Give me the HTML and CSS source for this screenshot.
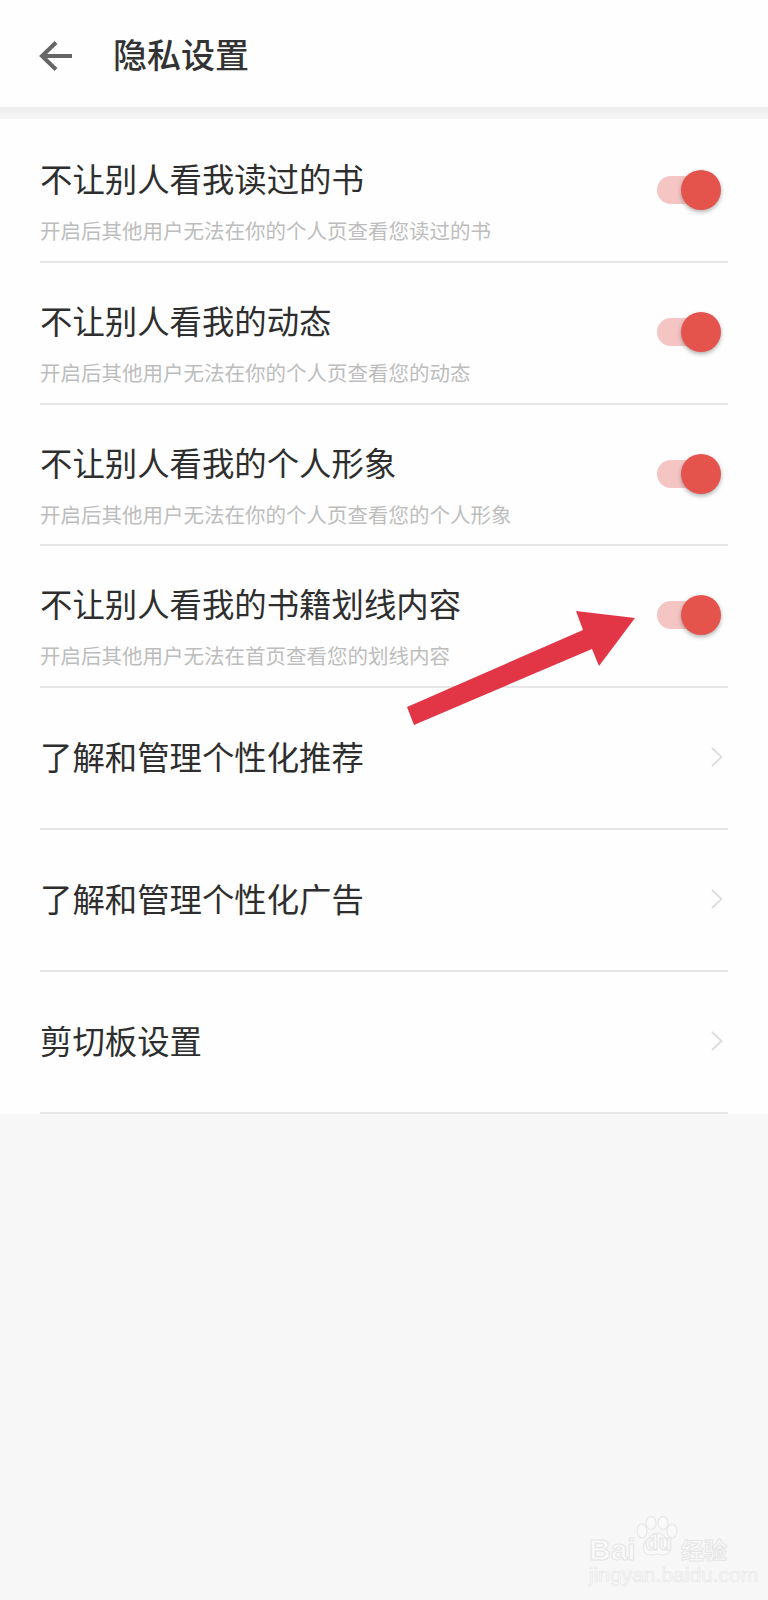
FILE: index.html
```html
<!DOCTYPE html>
<html lang="zh-CN">
<head>
<meta charset="utf-8">
<title>隐私设置</title>
<link rel="stylesheet" href="styles.css">
</head>
<body>
<div class="page">
  <header class="header">
    <svg class="back" viewBox="0 0 34 32" width="34" height="32"><path d="M33 16H4M17 2.500L3 16l14 13.500" fill="none" stroke="#666" stroke-width="4"/></svg>
    <h1 class="page-title">隐私设置</h1>
  </header>
  <div class="header-shadow"></div>
  <main class="list">
    <div class="row">
      <div class="text"><div class="title">不让别人看我读过的书</div><div class="sub">开启后其他用户无法在你的个人页查看您读过的书</div></div>
      <div class="toggle"><span class="track"></span><span class="knob"></span></div>
    </div>
    <div class="row">
      <div class="text"><div class="title">不让别人看我的动态</div><div class="sub">开启后其他用户无法在你的个人页查看您的动态</div></div>
      <div class="toggle"><span class="track"></span><span class="knob"></span></div>
    </div>
    <div class="row">
      <div class="text"><div class="title">不让别人看我的个人形象</div><div class="sub">开启后其他用户无法在你的个人页查看您的个人形象</div></div>
      <div class="toggle"><span class="track"></span><span class="knob"></span></div>
    </div>
    <div class="row">
      <div class="text"><div class="title">不让别人看我的书籍划线内容</div><div class="sub">开启后其他用户无法在首页查看您的划线内容</div></div>
      <div class="toggle"><span class="track"></span><span class="knob"></span></div>
    </div>
    <div class="row link"><div class="title">了解和管理个性化推荐</div><svg class="chev" viewBox="0 0 12 20" width="12" height="20"><path d="M1 1l9.500 9L1 19" fill="none" stroke="#dcdcdc" stroke-width="1.800"/></svg></div>
    <div class="row link"><div class="title">了解和管理个性化广告</div><svg class="chev" viewBox="0 0 12 20" width="12" height="20"><path d="M1 1l9.500 9L1 19" fill="none" stroke="#dcdcdc" stroke-width="1.800"/></svg></div>
    <div class="row link"><div class="title">剪切板设置</div><svg class="chev" viewBox="0 0 12 20" width="12" height="20"><path d="M1 1l9.500 9L1 19" fill="none" stroke="#dcdcdc" stroke-width="1.800"/></svg></div>
  </main>
  <svg class="arrow" viewBox="0 0 768 1600" width="768" height="1600"><polygon points="407,707 414,725 592,649 599,666 635,618 576,611 583,630" fill="#e23647"/></svg>
  <div class="mark">
    <div class="mark-top">
      <span class="mark-bai">Bai</span>
      <span class="mark-paw">
        <svg viewBox="0 0 44 44" width="44" height="44"><g fill="#f9f9f9" stroke="#e8e8e8" stroke-width="1.200"><ellipse cx="7" cy="15" rx="5" ry="7"/><ellipse cx="16" cy="7" rx="5" ry="6.500"/><ellipse cx="28" cy="7" rx="5" ry="6.500"/><ellipse cx="37" cy="15" rx="5" ry="7"/><path d="M22 17c-6 0-8 5-11 8-4 4-4 14 5 14 2 0 4-1 6-1s4 1 6 1c9 0 9-10 5-14-3-3-5-8-11-8z"/></g></svg>
        <span class="mark-du">du</span>
      </span>
      <span class="mark-cn">经验</span>
    </div>
    <div class="mark-url">jingyan.baidu.com</div>
  </div>
</div>
</body>
</html>
```
FILE: styles.css
```css
* { box-sizing: border-box; }
html, body { margin: 0; padding: 0; }
body {
  width: 768px;
  height: 1600px;
  overflow: hidden;
  background: #f7f7f7;
  font-family: "Noto Sans CJK SC", "Noto Sans", sans-serif;
}
.page { position: relative; width: 768px; height: 1600px; }
.header {
  height: 107px;
  background: #fefefe;
  display: flex;
  align-items: center;
  padding-left: 39px;
}
.back { flex: none; margin-top: 5px; }
.page-title {
  margin: 0 0 0 40px;
  font-size: 34px;
  line-height: 44px;
  font-weight: 500;
  color: #333;
}
.header-shadow {
  height: 12px;
  background: linear-gradient(#ececec, #f7f7f7);
}
.list { background: #fefefe; padding-top: 2px; }
.row {
  height: 141.800px;
  margin: 0 40px;
  border-bottom: 2px solid #e6e6e6;
  display: flex;
  justify-content: space-between;
  padding-right: 7px;
}
.text { padding-top: 35px; }
.title {
  font-size: 32.400px;
  line-height: 44px;
  color: #2e2e2e;
}
.sub {
  margin-top: 14px;
  font-size: 20.500px;
  line-height: 32px;
  color: #bdbdbd;
}
.toggle {
  position: relative;
  flex: none;
  width: 64px;
  height: 41px;
  margin-top: 49px;
}
.track {
  position: absolute;
  left: 0;
  top: 6px;
  width: 50px;
  height: 28px;
  border-radius: 14px;
  background: #f5c5c4;
}
.knob {
  position: absolute;
  right: 0;
  top: 0;
  width: 40px;
  height: 40px;
  border-radius: 50%;
  background: #e5534d;
  box-shadow: 0 2px 4px rgba(80, 80, 80, .45);
}
.link { align-items: center; padding-right: 5px; padding-bottom: 2px; }
.link .title { margin-top: -2px; }
.chev { flex: none; }
.arrow { position: absolute; left: 0; top: 0; pointer-events: none; }
.mark {
  position: absolute;
  left: 589px;
  top: 1517px;
  width: 142px;
  color: #f9f9f9;
}
.mark-top { display: flex; align-items: flex-end; height: 50px; }
.mark-bai, .mark-du, .mark-url, .mark-cn {
  font-family: "Liberation Sans", sans-serif;
  -webkit-text-stroke: 1px #e6e6e6;
}
.mark-bai { font-size: 30px; line-height: 34px; font-weight: 700; width: 46px; }
.mark-paw { position: relative; width: 44px; height: 44px; flex: none; margin-bottom: 7px; }
.mark-paw svg { display: block; }
.mark-du {
  position: absolute;
  left: 10px;
  top: 15px;
  font-size: 22px;
  line-height: 24px;
  font-weight: 700;
}
.mark-cn {
  font-family: "Noto Sans CJK SC", sans-serif;
  font-size: 23px;
  line-height: 32px;
  font-weight: 700;
  margin-left: 2px;
  margin-bottom: 2px;
  white-space: nowrap;
}
.mark-url {
  margin-top: -2px;
  font-size: 21px;
  line-height: 20px;
  font-weight: 400;
  white-space: nowrap;
  -webkit-text-stroke: .7px #e8e8e8;
}
```
